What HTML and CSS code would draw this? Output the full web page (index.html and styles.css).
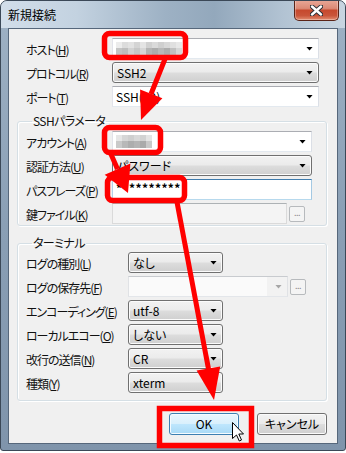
FILE: index.html
```html
<!DOCTYPE html>
<html lang="ja">
<head>
    <meta charset="UTF-8">
    <title>新規接続</title>
    <link rel="stylesheet" href="styles.css">
</head>
<body>
    <div class="window">
        <div class="titlebar">
            <span class="title">新規接続</span>
            <div class="close-btn">
                <svg width="13" height="11" viewBox="0 0 13 11">
                    <path d="M2 1.5 L11 9.5 M11 1.5 L2 9.5" stroke="#2b2f36" stroke-width="4.4" stroke-linecap="round"/>
                    <path d="M2 1.5 L11 9.5 M11 1.5 L2 9.5" stroke="#ffffff" stroke-width="2.4" stroke-linecap="round"/>
                </svg>
            </div>
        </div>
        <div class="client">
            <div class="main-rows">
                <div class="row">
                    <label class="lbl">ホスト(<u>H</u>)</label>
                    <div class="field combo-edit"><span class="mosaic host-mosaic"></span><span class="arrow"></span></div>
                </div>
                <div class="row">
                    <label class="lbl">プロトコル(<u>R</u>)</label>
                    <div class="field combo-list"><span>SSH2</span><span class="arrow"></span></div>
                </div>
                <div class="row">
                    <label class="lbl">ポート(<u>T</u>)</label>
                    <div class="field combo-edit"><span>SSH(22)</span><span class="arrow"></span></div>
                </div>
            </div>

            <fieldset class="group">
                <legend>SSHパラメータ</legend>
                <div class="row">
                    <label class="lbl">アカウント(<u>A</u>)</label>
                    <div class="field combo-edit"><span class="mosaic user-mosaic"></span><span class="arrow"></span></div>
                </div>
                <div class="row">
                    <label class="lbl">認証方法(<u>U</u>)</label>
                    <div class="field combo-list"><span>パスワード</span><span class="arrow"></span></div>
                </div>
                <div class="row">
                    <label class="lbl">パスフレーズ(<u>P</u>)</label>
                    <div class="field edit focus"><span class="secret">**********</span></div>
                </div>
                <div class="row">
                    <label class="lbl">鍵ファイル(<u>K</u>)</label>
                    <div class="field edit disabled key-field"></div>
                    <div class="browse">...</div>
                </div>
            </fieldset>

            <fieldset class="group terminal">
                <legend>ターミナル</legend>
                <div class="row">
                    <label class="lbl">ログの種別(<u>L</u>)</label>
                    <div class="field combo-list short"><span>なし</span><span class="arrow"></span></div>
                </div>
                <div class="row">
                    <label class="lbl">ログの保存先(<u>F</u>)</label>
                    <div class="field combo-edit disabled log-field"><span></span><span class="arrow"></span></div>
                    <div class="browse">...</div>
                </div>
                <div class="row">
                    <label class="lbl">エンコーディング(<u>E</u>)</label>
                    <div class="field combo-list short"><span>utf-8</span><span class="arrow"></span></div>
                </div>
                <div class="row">
                    <label class="lbl">ローカルエコー(<u>O</u>)</label>
                    <div class="field combo-list short"><span>しない</span><span class="arrow"></span></div>
                </div>
                <div class="row">
                    <label class="lbl">改行の送信(<u>N</u>)</label>
                    <div class="field combo-list short"><span>CR</span><span class="arrow"></span></div>
                </div>
                <div class="row">
                    <label class="lbl">種類(<u>Y</u>)</label>
                    <div class="field combo-list short"><span>xterm</span><span class="arrow"></span></div>
                </div>
            </fieldset>

            <div class="buttons">
                <button class="btn default">OK</button>
                <button class="btn">キャンセル</button>
            </div>
        </div>
    </div>

    <!-- red markup drawn over the dialog -->
    <svg class="marks" width="346" height="453" viewBox="0 0 346 453">
        <g fill="none" stroke="#ff0000" stroke-width="5.5">
            <rect x="104.5" y="33.5" width="81" height="24" rx="5"/>
            <rect x="104.5" y="127.5" width="56" height="25" rx="5"/>
            <rect x="107.5" y="177.5" width="77" height="23" rx="5"/>
            <rect x="159.5" y="408.5" width="92" height="37"/>
        </g>
        <g stroke="#ff0000" stroke-width="5">
            <line x1="165" y1="59" x2="151" y2="94"/>
            <line x1="110" y1="152" x2="117.5" y2="169"/>
            <line x1="177" y1="202" x2="208.5" y2="369"/>
        </g>
        <g fill="#ff0000">
            <polygon points="162.4,98.3 140.1,89.6 141,120"/>
            <polygon points="130.4,163.6 104.7,174.8 128,193"/>
            <polygon points="220.2,366.4 196.6,370.6 214,400"/>
        </g>
        <path class="cursor" d="M0 0 L0 16 L4 12.5 L6.8 18.5 L9 17.5 L6.3 11.5 L11 11.5 Z" transform="translate(232.5 422.5)"/>
    </svg>
</body>
</html>
```

FILE: styles.css
```css
body {
    margin: 0;
    background: #fff;
    font-family: "Noto Sans CJK JP", sans-serif;
    font-size: 12px;
    font-feature-settings: "palt";
    color: #000;
}

.window {
    position: relative;
    width: 346px;
    height: 451px;
    box-sizing: border-box;
    border: 1px solid #3b4857;
    border-radius: 7px 7px 3px 3px;
    background: linear-gradient(180deg, #9fb2c5 0%, #8a9fb5 50%, #7f94ab 100%);
    overflow: hidden;
}

.titlebar {
    height: 27px;
    display: flex;
    align-items: center;
    background: linear-gradient(90deg, #d2deea 0%, #c3d2e0 22%, #9db1c4 48%, #93a8bc 62%, #b2c3d3 82%, #c8d5e1 100%);
}

.title {
    padding-left: 7px;
    font-size: 12px;
    line-height: 1;
}

.close-btn {
    position: absolute;
    top: -1px;
    left: 293px;
    width: 45px;
    height: 21px;
    box-sizing: border-box;
    border: 1px solid #5a2418;
    border-top: none;
    border-radius: 0 0 5px 5px;
    background: linear-gradient(180deg, #e9a898 0%, #dc8a76 42%, #c6492e 52%, #c9553a 78%, #e38e72 100%);
    box-shadow: inset 0 0 0 1px rgba(255, 255, 255, 0.3);
    display: flex;
    align-items: center;
    justify-content: center;
}

.client {
    height: 416px;
    box-sizing: border-box;
    margin: 0 7px;
    border: 1px solid #56677b;
    background: #f0f0f0;
    padding: 9px 10px 0 8px;
}

.main-rows {
    padding: 0 8px 0 9px;
}

.row {
    display: flex;
    align-items: center;
    height: 21px;
    margin-bottom: 3px;
}

.row:last-child {
    margin-bottom: 0;
}

.lbl {
    flex: none;
    width: 86px;
    white-space: nowrap;
    line-height: 1;
    padding-top: 2px;
    letter-spacing: -1px;
    color: #111;
}

.lbl u {
    text-underline-offset: 1px;
}

.field {
    flex: 1;
    height: 21px;
    box-sizing: border-box;
    display: flex;
    align-items: center;
    justify-content: space-between;
    padding: 0 5px 0 3px;
    white-space: nowrap;
    line-height: 1;
}

.combo-edit, .edit {
    background: #fff;
    border: 1px solid;
    border-color: #abadb3 #dbdfe6 #e3e9ef #e2e3ea;
}

.combo-list {
    padding-left: 4px;
    border: 1px solid #707070;
    border-radius: 3px;
    background: linear-gradient(180deg, #f2f2f2 0%, #ebebeb 48%, #dddddd 52%, #cfcfcf 100%);
    box-shadow: inset 0 0 0 1px #fbfbfb;
}

.edit.focus {
    border-color: #3d7bad #a4c9e3 #b7d9ed #b5cfe7;
}

.edit.disabled {
    background: #f4f4f4;
    border-color: #adb2b5 #dadada #dadada #dadada;
}

.combo-edit.disabled {
    background: linear-gradient(90deg, #fafafa 0, #fafafa calc(100% - 20px), #f2f2f2 calc(100% - 20px));
    border-color: #c8cbcf #e0e2e5 #e3e6ea #e0e2e5;
}

.combo-edit.disabled .arrow {
    background: #a6a6a6;
}

.arrow {
    flex: none;
    width: 7px;
    height: 4px;
    background: #000;
    clip-path: polygon(0 0, 100% 0, 50% 100%);
}

.secret {
    font-weight: bold;
    font-size: 12px;
    letter-spacing: 0.4px;
    padding-bottom: 3px;
}

.mosaic {
    display: block;
    height: 13px;
}

.host-mosaic {
    width: 66px;
    background:
        linear-gradient(90deg, #ececec 0 6px, #dcdcdc 6px 12px, #e2e2e2 12px 18px, #d4d4d4 18px 24px, #e4e4e4 24px 30px, #d0d0d0 30px 36px, #dadada 36px 42px, #cfcfcf 42px 48px, #d8d8d8 48px 54px, #e0e0e0 54px 60px, #e8e8e8 60px 66px) top / 100% 6px no-repeat,
        linear-gradient(90deg, #c4c4c4 0 6px, #bdbdbd 6px 12px, #d2d2d2 12px 18px, #c6c6c6 18px 24px, #d6d6d6 24px 30px, #b4b4b4 30px 36px, #ababab 36px 42px, #b7b7b7 42px 48px, #acacac 48px 54px, #c0c0c0 54px 60px, #d6d6d6 60px 66px) bottom / 100% 7px no-repeat;
}

.user-mosaic {
    width: 36px;
    background:
        linear-gradient(90deg, #e6e6e6 0 6px, #d6d6d6 6px 12px, #cfcfcf 12px 18px, #d9d9d9 18px 24px, #d2d2d2 24px 30px, #e4e4e4 30px 36px) top / 100% 6px no-repeat,
        linear-gradient(90deg, #c9c9c9 0 6px, #b8b8b8 6px 12px, #adadad 12px 18px, #b4b4b4 18px 24px, #aaaaaa 24px 30px, #c8c8c8 30px 36px) bottom / 100% 7px no-repeat;
}

.group {
    margin: 7px 0 0;
    padding: 3px 14px 1px 8px;
    border: 1px solid #d5dfe5;
    border-radius: 3px;
    box-shadow: inset 1px 1px 0 #fff, 1px 1px 0 #fff;
    min-width: 0;
}

.group legend {
    margin-left: 6px;
    padding: 0 1px;
    line-height: 14px;
    letter-spacing: -0.6px;
    color: #111;
}

.group.terminal {
    margin-top: 10px;
    padding: 2px 14px 7px 8px;
}

.terminal .lbl {
    width: 102px;
}

.short {
    flex: none;
    width: 95px;
}

.key-field {
    flex: none;
    width: 175px;
}

.log-field {
    flex: none;
    width: 160px;
}

.browse {
    flex: none;
    width: 16px;
    height: 16px;
    margin-left: 2px;
    box-sizing: border-box;
    border: 1px solid #b7babd;
    border-radius: 2px;
    background: #f4f4f4;
    color: #8d8d8d;
    font-size: 9px;
    line-height: 12px;
    text-align: center;
    letter-spacing: -0.5px;
}

.buttons {
    display: flex;
    justify-content: flex-end;
    gap: 18px;
    margin-top: 12px;
}

.btn {
    width: 70px;
    height: 22px;
    padding: 0;
    border: 1px solid #707070;
    border-radius: 3px;
    background: linear-gradient(180deg, #f2f2f2 0%, #ebebeb 48%, #dddddd 52%, #cfcfcf 100%);
    box-shadow: inset 0 0 0 1px #fbfbfb;
    font-family: "Noto Sans CJK JP", sans-serif;
    font-size: 12px;
    font-feature-settings: "palt";
    color: #000;
    line-height: 1;
}

.btn.default {
    border-color: #3c7fb1;
    background: linear-gradient(180deg, #eaf6fd 0%, #d9f0fc 48%, #bee6fd 52%, #a7d9f5 100%);
    box-shadow: inset 0 0 0 1px #f4fbff;
}

.marks {
    position: absolute;
    top: 0;
    left: 0;
    pointer-events: none;
}

.cursor {
    fill: #fff;
    stroke: #000;
    stroke-width: 1;
    stroke-linejoin: miter;
}
```
